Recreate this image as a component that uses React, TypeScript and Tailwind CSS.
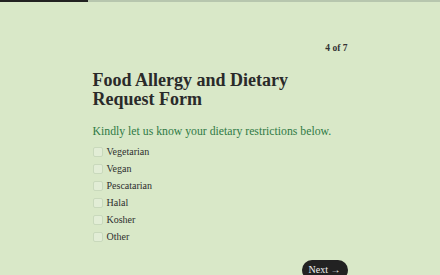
const options = ["Vegetarian", "Vegan", "Pescatarian", "Halal", "Kosher", "Other"];

export default function App() {
  return (
    <div
      className="w-[440px] h-[275px] overflow-hidden bg-[#d9e8c8] text-[#222]"
      style={{ fontFamily: '"Liberation Serif", "DejaVu Serif", serif' }}
    >
      {/* progress */}
      <div className="h-[2px] w-full bg-[#b7c6ae]">
        <div className="h-full w-[88px] bg-[#222]" />
      </div>

      <div className="mx-auto w-[255px] pt-[39px]">
        <p className="text-right text-[9.5px] font-bold leading-[14px] text-[#333]">4 of 7</p>

        <h1 className="mt-[16px] text-[18px] font-bold leading-[19px] text-[#2a2a2a]">
          Food Allergy and Dietary
          <br />
          Request Form
        </h1>

        <p className="mt-[15px] text-[11.75px] leading-[16px] text-[#2f7a45]">
          Kindly let us know your dietary restrictions below.
        </p>

        <div className="mt-[5px] flex flex-col gap-[4px]">
          {options.map((o) => (
            <label key={o} className="flex h-[13px] items-center gap-[4px] text-[10px] text-[#2e2e2e]">
              <span className="h-[10px] w-[10px] rounded-[2px] border border-[#c9d9bc] bg-[#e2edd6]" />
              {o}
            </label>
          ))}
        </div>

        <div className="mt-[17px] flex justify-end">
          <button className="h-[20px] rounded-full bg-[#222] px-[7px] text-[10px] leading-[20px] text-[#f2f2f2]">
            Next →
          </button>
        </div>
      </div>
    </div>
  );
}
